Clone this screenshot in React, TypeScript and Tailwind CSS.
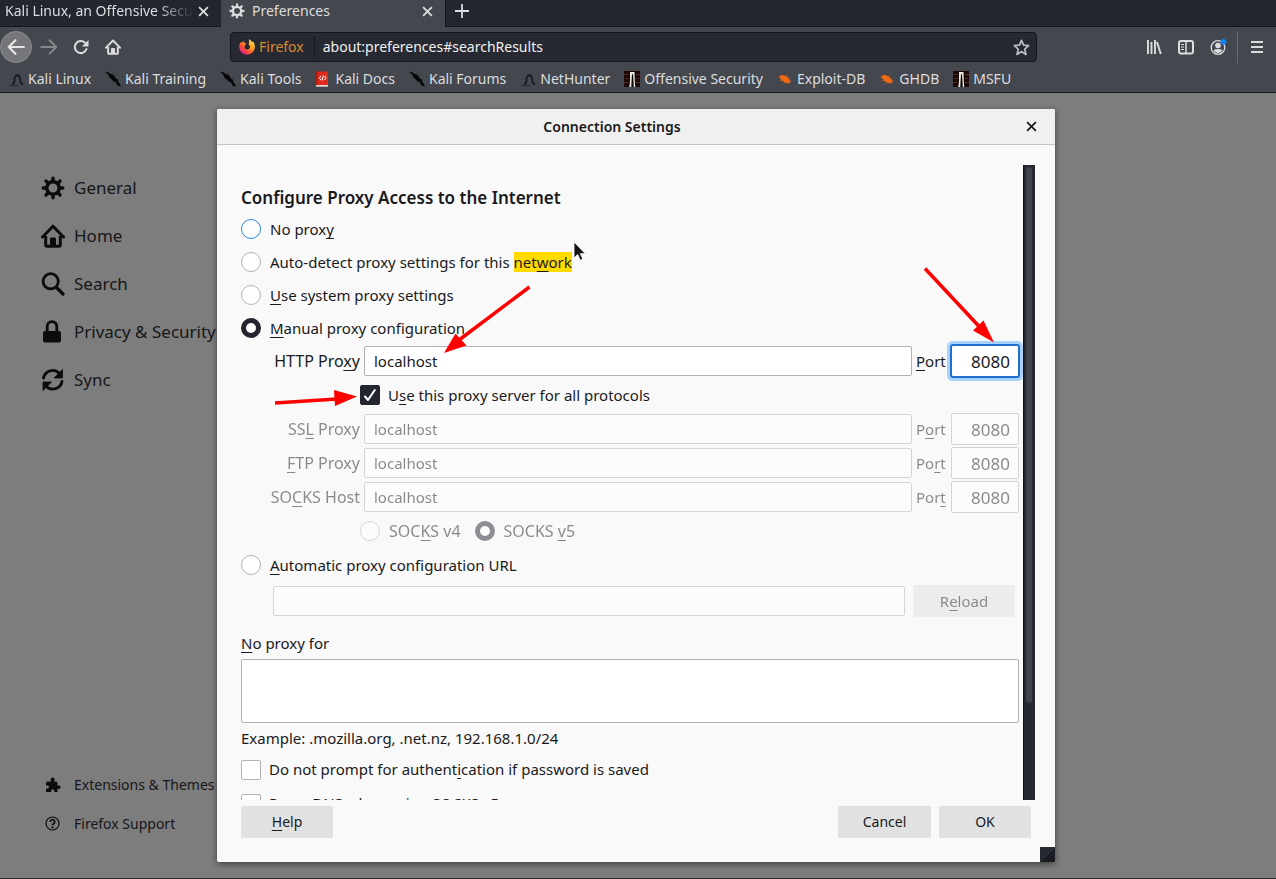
import React from "react";

type IconProps = { className?: string };

const GearIcon = ({ className }: IconProps) => (
  <svg viewBox="0 0 24 24" className={className} fill="none" stroke="currentColor" aria-hidden="true">
    <circle cx="12" cy="12" r="6.200" strokeWidth="3.400" />
    <g strokeWidth="3.400" strokeLinecap="round">
      <path d="M12 2.200v3M12 18.800v3M2.200 12h3M18.800 12h3M5 5l2 2M17 17l2 2M19 5l-2 2M7 17l-2 2" />
    </g>
  </svg>
);

const HomeIcon = ({ className }: IconProps) => (
  <svg viewBox="0 0 24 24" className={className} fill="none" stroke="currentColor" aria-hidden="true">
    <path d="M1.500 13L12 2.200L22.500 13" strokeWidth="3" strokeLinecap="round" strokeLinejoin="round" />
    <path d="M4.700 12v9q0 1.300 1.300 1.300h12q1.300 0 1.300-1.300V12" strokeWidth="3" />
    <path d="M9 22v-7.500q0-1 1-1h4q1 0 1 1V22z" fill="currentColor" stroke="none" />
  </svg>
);

const SearchIcon = ({ className }: IconProps) => (
  <svg viewBox="0 0 24 24" className={className} fill="none" stroke="currentColor" aria-hidden="true">
    <circle cx="9.700" cy="9.300" r="7.600" strokeWidth="2.800" />
    <path d="M15.500 15.500l6.500 6.500" strokeWidth="3.200" strokeLinecap="round" />
  </svg>
);

const LockIcon = ({ className }: IconProps) => (
  <svg viewBox="0 0 24 24" className={className} aria-hidden="true">
    <rect x="2" y="11" width="18" height="11.500" rx="2" fill="currentColor" />
    <path d="M6.200 12V6.500a4.800 4.800 0 0 1 9.600 0V12" fill="none" stroke="currentColor" strokeWidth="2.800" />
  </svg>
);

const SyncIcon = ({ className }: IconProps) => (
  <svg viewBox="0 0 24 24" className={className} fill="none" stroke="currentColor" aria-hidden="true">
    <path d="M2.500 10A9.300 9.300 0 0 1 18.500 5.500M21 13.500A9.300 9.300 0 0 1 5 18" strokeWidth="2.900" strokeLinecap="round" />
    <path d="M21.500 1.500v8.500h-8.500zM2 22.500V14h8.500z" fill="currentColor" strokeWidth="0.800" strokeLinejoin="round" />
  </svg>
);

const PuzzleIcon = ({ className }: IconProps) => (
  <svg viewBox="0 0 16 16" className={className} fill="currentColor" aria-hidden="true">
    <path d="M1 6q0-1.500 1.500-1.500H6V3.800A2 2 0 1 1 9.200 3.800V4.500H11q1.500 0 1.500 1.500v2.600h.8a1.700 1.700 0 1 1 0 3.200h-.8V15H9.200v-1.300a1.500 1.500 0 0 0-3 0V15H1v-3.500h1.500a1.500 1.500 0 0 0 0-3H1z" />
  </svg>
);

const HelpIcon = ({ className }: IconProps) => (
  <svg viewBox="0 0 16 16" className={className} fill="none" stroke="currentColor" aria-hidden="true">
    <circle cx="7.500" cy="7.500" r="6.500" strokeWidth="1.200" />
    <path d="M5.300 6a2.200 2.200 0 1 1 3.300 1.800Q7.500 8.500 7.500 9.300" strokeWidth="1.700" />
    <circle cx="7.500" cy="11.300" r="1.100" fill="currentColor" stroke="none" />
  </svg>
);

const CloseIcon = ({ className }: IconProps) => (
  <svg viewBox="0 0 12 12" className={className} fill="none" stroke="currentColor" strokeWidth="1.900" aria-hidden="true">
    <path d="M1.200 1.200l9.600 9.600M10.800 1.200L1.200 10.800" />
  </svg>
);

const FirefoxLogo = () => (
  <svg viewBox="0 0 16 16" className="size-4 shrink-0" aria-hidden="true">
    <defs>
      <linearGradient id="flame" x1="0.900" y1="0.100" x2="0.200" y2="0.900">
        <stop offset="0" stopColor="#ffe14a" />
        <stop offset="0.400" stopColor="#ff9a1f" />
        <stop offset="0.750" stopColor="#ff4a3c" />
        <stop offset="1" stopColor="#e0218a" />
      </linearGradient>
    </defs>
    <path
      fill="url(#flame)"
      d="M10 0c1 1.200 2.600 2 3.400 3.200.5-.3.600-.6.600-1C15.300 4 16 6 15.800 8.500A7.800 7.800 0 0 1 .3 9C0 6.500.6 4.300 2 2.800c0 .6.200 1 .5 1.300C3.200 3 4.300 2.300 5.200 2c-.3.700-.3 1.400 0 2h2.300c-.1 1-1.200 1.200-1.500 1.900 0 1.200.3 1.700-.9 1.900.3 1.700 1.500 2.800 3.100 2.700 2 0 3.100-1.500 2.700-3.300-.3-1-.9-1.500-1.500-1.700C10.500 4 9.800 2 10 0z"
    />
  </svg>
);

const DragonIcon = () => (
  <svg viewBox="0 0 16 16" className="size-4 shrink-0" aria-hidden="true">
    <path d="M4 13.500c2-.8 2.800-2.500 2.500-4.500C6.300 6.500 7.500 4.500 9.500 4.500c2.200.2 2.800 2 2.600 4.500.1 2 .9 3.500 2.900 4.500" fill="none" stroke="#1b1d22" strokeWidth="2" />
    <path d="M6 5.500l2.500-2.500 3 .8-3 1.500z" fill="#1b1d22" />
    <path d="M1 14h9l1 1.200H1z" fill="#1b1d22" opacity=".6" />
  </svg>
);

const KnifeIcon = () => (
  <svg viewBox="0 0 16 16" className="size-4 shrink-0" fill="#060607" aria-hidden="true">
    <path d="M0 .5l3.800.9L5.300 3l3 .4L11 7.500l1.800.9.3 2 3.200 5.400-3.500-1-2.400-4-2-.3-1.200-1.800-3-2.100-.5-2.300z" />
  </svg>
);

const DocsIcon = () => (
  <svg viewBox="0 0 16 16" className="size-4 shrink-0" aria-hidden="true">
    <rect x="1" y="0.500" width="12" height="13.500" fill="#de2a1c" />
    <path d="M1 14h12v1.700H1z" fill="#e8d7d2" />
    <path d="M1 .5h1.500V14H1z" fill="#a91b12" />
    <path d="M6 5L4.300 7 6 9M9.500 5l1.700 2-1.700 2M8.400 4.500l-1.300 5" stroke="#fff" fill="none" />
  </svg>
);

const TowerIcon = () => (
  <svg viewBox="0 0 16 16" className="size-4 shrink-0" aria-hidden="true">
    <rect width="16" height="16" fill="#1b0908" />
    <path d="M0 3h4v1H0zM1 7h4v1H1zM0 11h4v1H0zM12 3h4v1h-4zM12 7h3v1h-3zM12 11h4v1h-4z" fill="#5c2a26" />
    <path d="M6 1h4.500l.3 9 .4 6H9.500L9 3.500H8L7.500 16H5.300l.7-6z" fill="#eee8e4" />
    <path d="M8 3.500h1L9.500 16h-2z" fill="#050505" />
  </svg>
);

const BugIcon = () => (
  <svg viewBox="0 0 16 16" className="size-4 shrink-0" aria-hidden="true">
    <path d="M2.500 5.500q2-2.500 5.500-.8Q13 7 13.500 11q-1.500 2-5 .5Q3.500 9.500 2.500 5.500z" fill="#ef6a13" />
    <path d="M1 6l3 1M3 9.500l3-.5M5 3.500l2 2M10 4l-.5 2M13 6.500l-2 2M14.500 10l-3-.5M7 12.500l1-2M12 13l-1.500-2" stroke="#d5611a" strokeWidth=".8" />
  </svg>
);

const bookmarks: { label: string; Icon: () => React.ReactElement }[] = [
  { label: "Kali Linux", Icon: DragonIcon },
  { label: "Kali Training", Icon: KnifeIcon },
  { label: "Kali Tools", Icon: KnifeIcon },
  { label: "Kali Docs", Icon: DocsIcon },
  { label: "Kali Forums", Icon: KnifeIcon },
  { label: "NetHunter", Icon: DragonIcon },
  { label: "Offensive Security", Icon: TowerIcon },
  { label: "Exploit-DB", Icon: BugIcon },
  { label: "GHDB", Icon: BugIcon },
  { label: "MSFU", Icon: TowerIcon },
];

const categories = [
  { label: "General", Icon: GearIcon },
  { label: "Home", Icon: HomeIcon },
  { label: "Search", Icon: SearchIcon },
  { label: "Privacy & Security", Icon: LockIcon },
  { label: "Sync", Icon: SyncIcon },
];

/* Text with its access key underlined; the key is the part between underscores. */
const Keyed = ({ text }: { text: string }) => {
  const [before, key, after] = text.split("_");
  return (
    <span>
      {before}
      <span className="underline decoration-1 underline-offset-3 [text-decoration-skip-ink:none]">{key}</span>
      {after}
    </span>
  );
};

function BrowserChrome() {
  return (
    <header className="shrink-0 border-b border-[#14161d] bg-[#44474e] text-[14px] leading-5 text-[#dcdddf]">
      <div className="flex h-[27px] bg-[#23262f]">
        <div className="flex w-[221px] items-center border-b border-[#14161d] pb-1 pl-[5px] pr-3">
          <span className="flex-1 overflow-hidden whitespace-nowrap [mask-image:linear-gradient(to_right,black_80%,transparent)]">
            Kali Linux, an Offensive Secu
          </span>
          <button aria-label="Close tab" className="ml-1">
            <CloseIcon className="size-[11px]" />
          </button>
        </div>
        <div className="flex w-[224px] items-center bg-[#44474e] pb-[5px] pl-2 pr-3">
          <GearIcon className="size-4" />
          <span className="ml-[7px] flex-1">Preferences</span>
          <button aria-label="Close tab">
            <CloseIcon className="size-[11px]" />
          </button>
        </div>
        <div className="flex flex-1 items-center border-b border-l border-[#14161d] pb-1 pl-2">
          <button aria-label="New tab">
            <svg viewBox="0 0 16 16" className="size-4" fill="none" stroke="currentColor" strokeWidth="1.800">
              <path d="M8 1v14M1 8h14" />
            </svg>
          </button>
        </div>
      </div>

      <div className="flex h-10 items-center">
        <nav className="flex w-[230px] items-center">
          <button aria-label="Back" className="flex size-8 items-center justify-center rounded-full border border-[#8a8c90] bg-[#74767a]">
            <svg viewBox="0 0 16 16" className="size-[18px]" fill="none" stroke="#e6e6e7" strokeWidth="1.900" strokeLinecap="round" strokeLinejoin="round">
              <path d="M15 8H1.500M7.500 2L1.500 8l6 6" />
            </svg>
          </button>
          <button aria-label="Forward" className="ml-2 flex size-[18px] items-center justify-center">
            <svg viewBox="0 0 16 16" className="size-[18px]" fill="none" stroke="#85878c" strokeWidth="1.700" strokeLinecap="round" strokeLinejoin="round">
              <path d="M1 8h13.500M8.500 2l6 6-6 6" />
            </svg>
          </button>
          <button aria-label="Reload" className="ml-[15px] flex size-4 items-center justify-center">
            <svg viewBox="0 0 16 16" className="size-4" fill="none" stroke="currentColor" strokeWidth="2">
              <path d="M13.500 10A6 6 0 1 1 12 3.800" strokeLinecap="round" />
              <path d="M15.500 1v6.500H9z" fill="currentColor" stroke="none" />
            </svg>
          </button>
          <button aria-label="Home" className="ml-4 flex size-4 items-center justify-center">
            <HomeIcon className="size-4" />
          </button>
        </nav>
        <div className="flex h-[30px] flex-1 items-center rounded border border-[#14161d] bg-[#262932] pl-2 pr-1.5">
          <FirefoxLogo />
          <span className="ml-1 text-[#d98a2b]">Firefox</span>
          <span className="ml-2.5 h-[22px] w-px bg-[#14161d]" />
          <input aria-label="Address" defaultValue="about:preferences#searchResults" className="min-w-0 flex-1 bg-transparent pl-2 text-[#f0f0f1] outline-none" />
          <button aria-label="Bookmark this page">
            <svg viewBox="0 0 18 18" className="size-[17px]" fill="none" stroke="#b9bbbf" strokeWidth="1.900" strokeLinejoin="round">
              <path d="M9 1.500l2.200 5 5.300.5-4 3.700 1.200 5.600L9 13.300l-4.700 3 1.200-5.600-4-3.700 5.300-.5z" />
            </svg>
          </button>
        </div>
        <div className="flex w-[239px] items-center justify-end">
          <button aria-label="Library" className="size-4">
            <svg viewBox="0 0 16 16" className="size-4" fill="none" stroke="currentColor" strokeWidth="1.900">
              <path d="M2 1v14M5.500 3v12M9 1v14M11 3l3.800 12" />
            </svg>
          </button>
          <button aria-label="Sidebars" className="ml-4 size-4">
            <svg viewBox="0 0 16 16" className="size-4" fill="none" stroke="currentColor">
              <rect x="1" y="2" width="14" height="12.500" rx="2" strokeWidth="2" />
              <path d="M8 2v12" strokeWidth="1.500" />
              <path d="M3 5.500h3M3 8h3M3 10.500h3" />
            </svg>
          </button>
          <button aria-label="Account" className="ml-4 size-4">
            <svg viewBox="0 0 16 16" className="size-4 overflow-visible" aria-hidden="true">
              <circle cx="8" cy="8.500" r="6.800" fill="none" stroke="currentColor" strokeWidth="1.300" />
              <circle cx="8" cy="6.500" r="2.800" fill="currentColor" />
              <path d="M3.500 11q4.500-2 9 0-1.500 3-4.500 3t-4.500-3z" fill="currentColor" />
              <circle cx="13.500" cy="2.800" r="2.900" fill="#0a84ff" />
            </svg>
          </button>
          <span className="ml-[11px] h-8 w-px bg-[#6a6c72]" />
          <button aria-label="Menu" className="mx-[13px] flex flex-col gap-[3px]">
            <span className="h-0.5 w-3 bg-current" />
            <span className="h-0.5 w-3 bg-current" />
            <span className="h-0.5 w-3 bg-current" />
          </button>
        </div>
      </div>

      <nav aria-label="Bookmarks" className="flex h-[25px] items-center gap-3.5 pb-px pl-2">
        {bookmarks.map(({ label, Icon }) => (
          <a key={label} href="#" className="flex items-center gap-1 whitespace-nowrap">
            <Icon />
            {label}
          </a>
        ))}
      </nav>
    </header>
  );
}

function Sidebar() {
  return (
    <aside className="flex w-[240px] flex-col justify-between pb-[35px] pl-[41px] pt-[71px] text-[#161617]">
      <nav>
        {categories.map(({ label, Icon }) => (
          <a key={label} href="#" className="flex h-12 items-center gap-[9px] whitespace-nowrap text-[17px]">
            <Icon className="size-6 text-[#0c0c0d]" />
            {label}
          </a>
        ))}
      </nav>
      <nav>
        <a href="#" className="flex h-[39px] items-center gap-[13px] whitespace-nowrap text-[14px]">
          <PuzzleIcon className="ml-1 size-4 text-[#0c0c0d]" />
          Extensions &amp; Themes
        </a>
        <a href="#" className="flex h-[39px] items-center gap-[13px] whitespace-nowrap text-[14px]">
          <HelpIcon className="ml-1 size-4 text-[#0c0c0d]" />
          Firefox Support
        </a>
      </nav>
    </aside>
  );
}

const radioBase = "size-5 shrink-0 appearance-none rounded-full border bg-white";

type RadioProps = { name: string; label: React.ReactNode; checked?: boolean; focused?: boolean; disabled?: boolean };

const Radio = ({ name, label, checked, focused, disabled }: RadioProps) => (
  <label className={disabled ? "flex items-center gap-[9px] text-[16px] opacity-50" : "flex h-[33px] items-center gap-[9px]"}>
    <input
      type="radio"
      name={name}
      defaultChecked={checked}
      disabled={disabled}
      className={`${radioBase} ${focused ? "border-[#2a85de]" : "border-[#b1b1b3]"} checked:border-[5px] checked:border-[#23262f]`}
    />
    {label}
  </label>
);

const checkBase = "size-5 shrink-0 appearance-none rounded-xs border border-[#b1b1b3] bg-white";

type ProxyRowProps = { id: string; label: string; port: string; disabled?: boolean };

const ProxyRow = ({ id, label, port, disabled }: ProxyRowProps) => (
  <div className={`grid h-[34px] grid-cols-[119px_1fr_31px_68px] items-center gap-1 ${disabled ? "opacity-50" : ""}`}>
    <label htmlFor={id} className="text-right text-[16px]">
      <Keyed text={label} />
    </label>
    <input id={id} disabled={disabled} defaultValue="localhost" className="h-[30px] min-w-0 rounded-xs border border-[#b1b1b3] bg-white px-[9px]" />
    <label htmlFor={`${id}-port`} className="whitespace-nowrap">
      <Keyed text={port} />
    </label>
    <input
      id={`${id}-port`}
      disabled={disabled}
      defaultValue="8080"
      className={`h-8 min-w-0 rounded-xs border bg-white px-2 text-right text-[17px] ${
        disabled ? "border-[#b1b1b3]" : "border-[#1f6fd0] shadow-[0_0_0_1px_#1f6fd0,0_0_0_4px_#a9d2fb]"
      }`}
    />
  </div>
);

const buttonBase = "h-8 rounded-xs bg-[#e1e1e2]";

function ConnectionDialog() {
  return (
    <section role="dialog" aria-labelledby="dialog-title" className="relative flex min-h-0 w-full max-w-[838px] flex-col rounded-xs bg-[#f9f9fa] text-[15px] leading-5 text-[#19191b] shadow-[0_2px_6px_rgba(0,0,0,0.5)]">
      <div className="grid h-9 shrink-0 grid-cols-[1fr_48px] items-center rounded-t-xs border-b border-[#c3c4c6] bg-[#f0f0f0]">
        <h1 id="dialog-title" className="text-center text-[14px] font-semibold">Connection Settings</h1>
        <button aria-label="Close" className="flex items-center justify-center">
          <CloseIcon className="size-[11px]" />
        </button>
      </div>

      <div className="ml-6 mr-5 mt-5 flex min-h-0 flex-1 overflow-hidden">
        <div className="min-w-0 flex-1 overflow-hidden pr-1 pt-4">
          <h2 className="flex h-8 items-center pt-0.5 text-[17px] font-semibold">Configure Proxy Access to the Internet</h2>
          <div className="-mt-px">
            <Radio name="proxy" focused label={<Keyed text="No prox_y_" />} />
            <Radio
              name="proxy"
              label={
                <span>
                  Auto-detect proxy settings for this{" "}
                  <mark className="bg-[#ffdb00] text-inherit">
                    <Keyed text="net_w_ork" />
                  </mark>
                </span>
              }
            />
            <Radio name="proxy" label={<Keyed text="_U_se system proxy settings" />} />
            <Radio name="proxy" checked label={<Keyed text="_M_anual proxy configuration" />} />
          </div>
          <ProxyRow id="http" label="HTTP Pro_x_y" port="_P_ort" />
          <label className="ml-[119px] flex h-[34px] items-center gap-2">
            <span className="grid shrink-0">
              <input type="checkbox" defaultChecked className={`${checkBase} col-start-1 row-start-1 checked:border-[#23262f] checked:bg-[#23262f]`} />
              <svg viewBox="0 0 20 20" className="pointer-events-none col-start-1 row-start-1 size-5" fill="none" stroke="#fff" strokeWidth="2" strokeLinecap="round" strokeLinejoin="round">
                <path d="M5 11.500l3 3.500 6.800-10" />
              </svg>
            </span>
            <Keyed text="U_s_e this proxy server for all protocols" />
          </label>
          <ProxyRow id="ssl" disabled label="SS_L_ Proxy" port="P_o_rt" />
          <ProxyRow id="ftp" disabled label="_F_TP Proxy" port="Po_r_t" />
          <ProxyRow id="socks" disabled label="SO_C_KS Host" port="Por_t_" />
          <div className="ml-[119px] flex h-[34px] items-center gap-3.5">
            <Radio name="socks-version" disabled label={<Keyed text="SOC_K_S v4" />} />
            <Radio name="socks-version" disabled checked label={<Keyed text="SOCKS _v_5" />} />
          </div>
          <Radio name="proxy" label={<Keyed text="_A_utomatic proxy configuration URL" />} />
          <div className="ml-8 mr-1 flex h-10 items-center gap-2 opacity-50">
            <input aria-label="Automatic proxy configuration URL" disabled className="h-[30px] min-w-0 flex-1 rounded-xs border border-[#b1b1b3] bg-white px-[9px]" />
            <button disabled className={`${buttonBase} w-[102px]`}>
              <Keyed text="R_e_load" />
            </button>
          </div>
          <label htmlFor="no-proxy" className="flex h-[38px] items-center pt-[6px]">
            <Keyed text="_N_o proxy for" />
          </label>
          <textarea id="no-proxy" className="block h-16 w-full resize-none rounded-xs border border-[#b1b1b3] bg-white p-2" />
          <p className="flex h-[30px] items-center">Example: .mozilla.org, .net.nz, 192.168.1.0/24</p>
          <label className="flex h-[34px] items-center gap-2">
            <input type="checkbox" className={checkBase} />
            <span className="pb-0.5">
              <Keyed text="Do not prompt for authent_i_cation if password is saved" />
            </span>
          </label>
          <label className="flex h-[34px] items-center gap-2">
            <input type="checkbox" className={checkBase} />
            <span className="pb-0.5">Proxy DNS when using SOCKS v5</span>
          </label>
        </div>
        <div className="flex w-3 shrink-0 flex-col border-l border-[#0e1118] bg-[#252831] py-0.5 pl-0.5">
          <div className="h-[85%] w-1.5 rounded-full bg-[#42454e]" />
        </div>
      </div>

      <footer className="flex shrink-0 gap-2 px-6 pb-6 pt-1.5 text-[14px]">
        <button className={`${buttonBase} mr-auto w-[92px]`}>
          <Keyed text="_H_elp" />
        </button>
        <button className={`${buttonBase} w-[93px]`}>Cancel</button>
        <button className={`${buttonBase} w-[92px]`}>OK</button>
      </footer>

      <svg viewBox="0 0 15 15" className="absolute bottom-0 right-0 size-[15px]" aria-hidden="true">
        <rect width="15" height="15" fill="#262932" />
        <path d="M3 15L15 3M7 15l8-8M11 15l4-4" stroke="#0d0f15" strokeWidth="1.300" />
      </svg>

      <svg viewBox="0 0 838 753" className="pointer-events-none absolute left-0 top-0 h-[753px] w-[838px]" aria-hidden="true">
        <g stroke="#f00" strokeWidth="3.500">
          <path d="M312.500 178L242 231M708 159.500l56 60M58 294l62-4" />
        </g>
        <g fill="#f00">
          <path d="M227 244l11.500-19.500 11 12zM777 233.500l-21-12 10.500-10zM140 287.500l-23-6.500 1 16z" />
        </g>
        <path d="M357 133v16l3.700-3.500 2.500 5.700 2.600-1.200-2.500-5.300h5z" fill="#111" stroke="#fff" strokeWidth="0.800" />
      </svg>
    </section>
  );
}

export default function App() {
  return (
    <div className="flex h-screen flex-col overflow-hidden bg-[#7d7d7e] font-['Noto_Sans',sans-serif]">
      <BrowserChrome />
      <main className="relative flex min-h-0 flex-1 border-b border-[#2a2a2e]">
        <Sidebar />
        <div className="absolute inset-0 flex justify-center py-4 pl-4 pr-5">
          <ConnectionDialog />
        </div>
      </main>
    </div>
  );
}
